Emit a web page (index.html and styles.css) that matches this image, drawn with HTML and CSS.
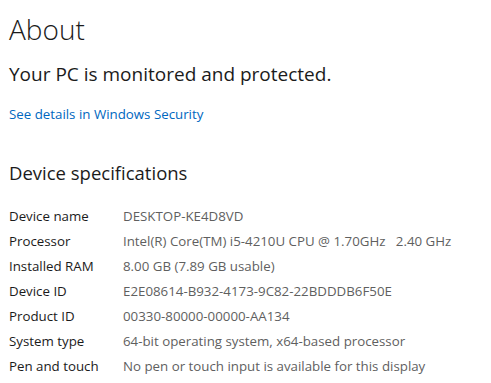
FILE: index.html
```html
<!DOCTYPE html>
<html lang="en">
<head>
  <meta charset="UTF-8" />
  <title>About</title>
  <link rel="stylesheet" href="styles.css">
</head>
<body>
  <div class="page">
    <h1 class="page-title">About</h1>
    <p class="status">Your PC is monitored and protected.</p>
    <a class="link" href="#">See details in Windows Security</a>

    <h2 class="section-title">Device specifications</h2>
    <dl class="specs">
      <dt>Device name</dt><dd>DESKTOP-KE4D8VD</dd>
      <dt>Processor</dt><dd>Intel(R) Core(TM) i5-4210U CPU @ 1.70GHz&nbsp;&nbsp; 2.40 GHz</dd>
      <dt>Installed RAM</dt><dd>8.00 GB (7.89 GB usable)</dd>
      <dt>Device ID</dt><dd>E2E08614-B932-4173-9C82-22BDDDB6F50E</dd>
      <dt>Product ID</dt><dd>00330-80000-00000-AA134</dd>
      <dt>System type</dt><dd>64-bit operating system, x64-based processor</dd>
      <dt>Pen and touch</dt><dd>No pen or touch input is available for this display</dd>
    </dl>
  </div>
</body>
</html>
```

FILE: styles.css
```css
* { box-sizing: border-box; margin: 0; padding: 0; }
body {
  background: #fff;
  font-family: 'Open Sans', 'Noto Sans', sans-serif;
  color: #1b1b1b;
  overflow: hidden;
}

.page { padding: 11px 9px 0; }

.page-title {
  font-size: 28px;
  font-weight: 300;
  line-height: 36px;
}
.status {
  font-size: 19px;
  font-weight: 400;
  line-height: 26px;
  margin-top: 14px;
}
.link {
  display: block;
  margin-top: 17px;
  font-size: 13.3px;
  line-height: 20px;
  color: #0067c0;
  text-decoration: none;
}

.section-title {
  font-size: 18.5px;
  font-weight: 400;
  line-height: 26px;
  margin-top: 36px;
}

/* SPEC TABLE */
.specs {
  display: grid;
  grid-template-columns: 114px 1fr;
  grid-auto-rows: 25px;
  margin-top: 18px;
  font-size: 13.3px;
  line-height: 25px;
  white-space: nowrap;
}
.specs dt { color: #1b1b1b; }
.specs dd { color: #5f5f5f; }
```
